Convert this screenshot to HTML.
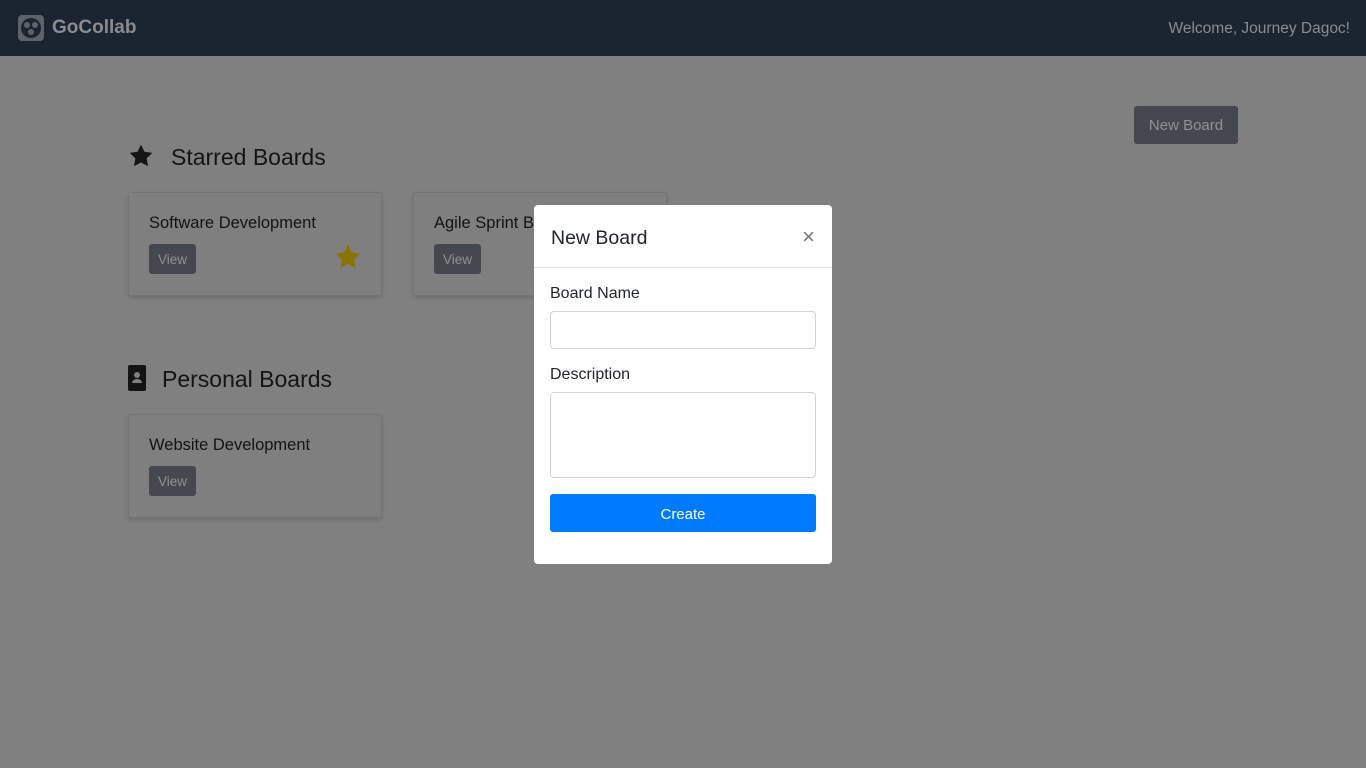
<!DOCTYPE html>
<html><head><style>
body{margin:0;width:1366px;height:768px;background:#808080;font-family:"Liberation Sans",sans-serif;position:relative;overflow:hidden}
.nav{position:absolute;left:0;top:0;width:1366px;height:56px;background:#1b2431}
.logo{position:absolute;left:18px;top:15px;width:26px;height:26px;border-radius:4px;background:#5d636b}
.brand{position:absolute;left:52px;top:17px;font-size:19px;font-weight:bold;color:#8a8c90}
.welcome{position:absolute;right:16px;top:20px;font-size:15.5px;color:#8a8c90}
.nb{position:absolute;left:1134px;top:106px;width:104px;height:38px;background:#45494f;border-radius:3px;color:#8f9195;font-size:15px;line-height:40px;text-align:center}
h2{position:absolute;margin:0;font-weight:normal;font-size:23px;color:#141414}
.card{position:absolute;width:252px;height:102px;border:1px solid #747474;border-radius:3px;background:#7f7f7f;box-shadow:0 2px 4px rgba(0,0,0,.15)}
.card .t{position:absolute;left:20px;top:21px;font-size:16.5px;color:#131313}
.card .v{position:absolute;left:20px;top:51px;height:30px;padding:0 9px;background:#45494f;border-radius:3px;color:#8f9195;font-size:13.5px;line-height:32px}
.modal{position:absolute;left:534px;top:205px;width:298px;height:359px;background:#fff;border-radius:4px}
.mh{height:62px;border-bottom:1px solid #dee2e6}
.mt{position:absolute;left:17px;top:22px;font-size:19.5px;color:#212529}
.x{position:absolute;right:17px;top:19px;font-size:22px;color:#777}
.lb{position:absolute;left:16px;font-size:16px;color:#212529}
.in{position:absolute;left:16px;width:266px;border:1px solid #ced4da;border-radius:4px;box-sizing:border-box}
.btn{position:absolute;left:16px;top:289px;width:266px;height:38px;background:#007bff;border-radius:3px;color:#fff;font-size:15px;line-height:41px;text-align:center}
</style></head><body>
<div class="nav"><div class="logo"><svg width="26" height="26" viewBox="0 0 26 26"><circle cx="13" cy="13" r="10" fill="#1c2431"/><circle cx="9" cy="10" r="3" fill="#5d636b"/><circle cx="17" cy="10" r="3" fill="#5d636b"/><circle cx="13" cy="17" r="3" fill="#5d636b"/></svg></div><div class="brand">GoCollab</div><div class="welcome">Welcome, Journey Dagoc!</div></div>
<div class="nb">New Board</div>
<svg style="position:absolute;left:128px;top:143px" width="26" height="26" viewBox="0 0 24 24"><path d="M12 1.5l3.2 6.6 7.2 1-5.2 5.1 1.3 7.2L12 18l-6.5 3.4 1.3-7.2L1.6 9.1l7.2-1z" fill="#141414"/></svg>
<h2 style="left:171px;top:144px">Starred Boards</h2>
<div class="card" style="left:128px;top:192px"><div class="t">Software Development</div><div class="v">View</div>
<svg style="position:absolute;left:205px;top:50px" width="28" height="28" viewBox="0 0 24 24"><path d="M12 1.5l3.2 6.6 7.2 1-5.2 5.1 1.3 7.2L12 18l-6.5 3.4 1.3-7.2L1.6 9.1l7.2-1z" fill="#8a7400"/></svg></div>
<div class="card" style="left:413px;top:192px"><div class="t">Agile Sprint Board</div><div class="v">View</div></div>
<svg style="position:absolute;left:128px;top:365px" width="18" height="26" viewBox="0 0 18 26"><rect x="0" y="0" width="18" height="26" rx="2" fill="#141414"/><circle cx="9" cy="10" r="3" fill="#808080"/><path d="M4 18a5 4 0 0 1 10 0z" fill="#808080"/></svg>
<h2 style="left:162px;top:366px">Personal Boards</h2>
<div class="card" style="left:128px;top:414px"><div class="t">Website Development</div><div class="v">View</div></div>
<div class="modal"><div class="mh"></div><div class="mt">New Board</div><div class="x">×</div>
<div class="lb" style="top:80px">Board Name</div><div class="in" style="top:106px;height:38px"></div>
<div class="lb" style="top:161px">Description</div><div class="in" style="top:187px;height:86px"></div>
<div class="btn">Create</div></div>
</body></html>
